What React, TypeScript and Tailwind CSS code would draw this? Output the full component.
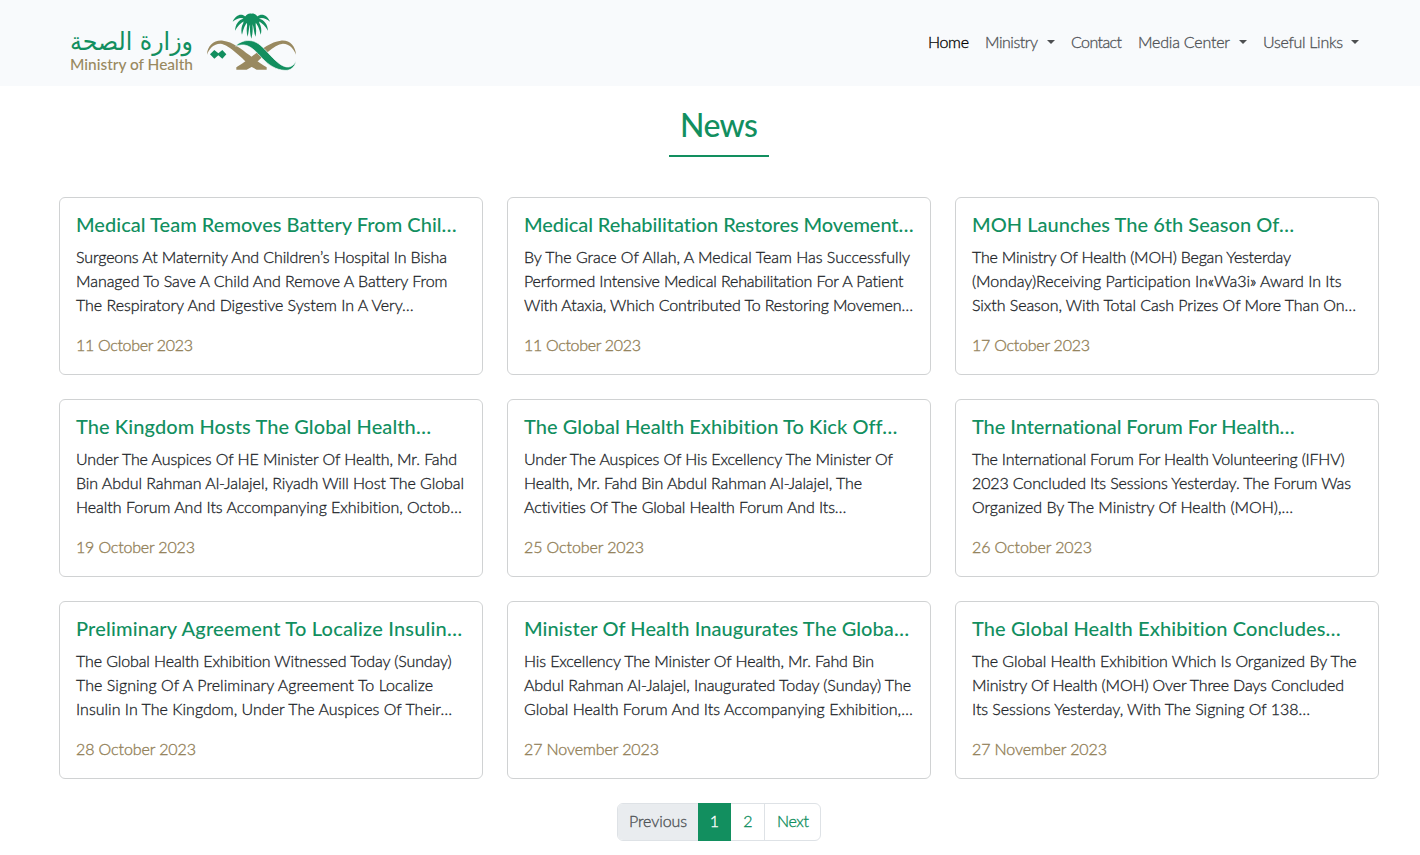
import { useLayoutEffect, useRef, useState } from "react";

type Line = [text: string, width: number];

/* One line of text, tracked so that it fills the given measure. */
function Fit({ line, className = "" }: { line: Line; className?: string }) {
  const [text, width] = line;
  const ref = useRef<HTMLSpanElement>(null);
  const [spacing, setSpacing] = useState(0);
  useLayoutEffect(() => {
    const el = ref.current;
    if (!el) return;
    el.style.letterSpacing = "0px";
    setSpacing((width - el.getBoundingClientRect().width) / (text.length - 1));
    el.style.letterSpacing = "";
  }, [text, width]);
  return (
    <span className={`block whitespace-nowrap ${className}`} style={{ width }}>
      <span ref={ref} style={{ letterSpacing: `${spacing}px` }}>
        {text}
      </span>
    </span>
  );
}

const news: { title: Line; body: Line[]; date: Line }[] = [
  {
    title: ["Medical Team Removes Battery From Chil…", 380],
    body: [
      ["Surgeons At Maternity And Children’s Hospital In Bisha", 371],
      ["Managed To Save A Child And Remove A Battery From", 371],
      ["The Respiratory And Digestive System In A Very…", 338],
    ],
    date: ["11 October 2023", 117],
  },
  {
    title: ["Medical Rehabilitation Restores Movement…", 390],
    body: [
      ["By The Grace Of Allah, A Medical Team Has Successfully", 386],
      ["Performed Intensive Medical Rehabilitation For A Patient", 380],
      ["With Ataxia, Which Contributed To Restoring Movemen…", 389],
    ],
    date: ["11 October 2023", 117],
  },
  {
    title: ["MOH Launches The 6th Season Of…", 322],
    body: [
      ["The Ministry Of Health (MOH) Began Yesterday", 319],
      ["(Monday)Receiving Participation In«Wa3i» Award In Its", 370],
      ["Sixth Season, With Total Cash Prizes Of More Than On…", 384],
    ],
    date: ["17 October 2023", 118],
  },
  {
    title: ["The Kingdom Hosts The Global Health…", 355],
    body: [
      ["Under The Auspices Of HE Minister Of Health, Mr. Fahd", 381],
      ["Bin Abdul Rahman Al-Jalajel, Riyadh Will Host The Global", 388],
      ["Health Forum And Its Accompanying Exhibition, Octob…", 386],
    ],
    date: ["19 October 2023", 119],
  },
  {
    title: ["The Global Health Exhibition To Kick Off…", 373],
    body: [
      ["Under The Auspices Of His Excellency The Minister Of", 369],
      ["Health, Mr. Fahd Bin Abdul Rahman Al-Jalajel, The", 338],
      ["Activities Of The Global Health Forum And Its…", 323],
    ],
    date: ["25 October 2023", 120],
  },
  {
    title: ["The International Forum For Health…", 323],
    body: [
      ["The International Forum For Health Volunteering (IFHV)", 373],
      ["2023 Concluded Its Sessions Yesterday. The Forum Was", 379],
      ["Organized By The Ministry Of Health (MOH),…", 321],
    ],
    date: ["26 October 2023", 120],
  },
  {
    title: ["Preliminary Agreement To Localize Insulin…", 386],
    body: [
      ["The Global Health Exhibition Witnessed Today (Sunday)", 376],
      ["The Signing Of A Preliminary Agreement To Localize", 357],
      ["Insulin In The Kingdom, Under The Auspices Of Their…", 376],
    ],
    date: ["28 October 2023", 120],
  },
  {
    title: ["Minister Of Health Inaugurates The Globa…", 385],
    body: [
      ["His Excellency The Minister Of Health, Mr. Fahd Bin", 350],
      ["Abdul Rahman Al-Jalajel, Inaugurated Today (Sunday) The", 387],
      ["Global Health Forum And Its Accompanying Exhibition,…", 389],
    ],
    date: ["27 November 2023", 135],
  },
  {
    title: ["The Global Health Exhibition Concludes…", 369],
    body: [
      ["The Global Health Exhibition Which Is Organized By The", 385],
      ["Ministry Of Health (MOH) Over Three Days Concluded", 372],
      ["Its Sessions Yesterday, With The Signing Of 138…", 338],
    ],
    date: ["27 November 2023", 135],
  },
];

const links: { label: Line; menu?: boolean; active?: boolean }[] = [
  { label: ["Home", 41], active: true },
  { label: ["Ministry", 53], menu: true },
  { label: ["Contact", 51] },
  { label: ["Media Center", 92], menu: true },
  { label: ["Useful Links", 80], menu: true },
];

function Logo() {
  return (
    <svg width="236" height="78" viewBox="0 0 236 78" role="img" aria-label="Ministry of Health">
      <text
        x="133"
        y="46"
        direction="rtl"
        textLength="123"
        lengthAdjust="spacingAndGlyphs"
        className="fill-[#128f5f] font-['DejaVu_Sans',sans-serif] text-[25px] font-normal"
      >
        وزارة الصحة
      </text>
      <text
        x="10"
        y="65.5"
        textLength="123"
        lengthAdjust="spacingAndGlyphs"
        className="fill-[#998960] font-['Lato',sans-serif] text-[15.5px] font-medium"
      >
        Ministry of Health
      </text>
      <g transform="translate(136 0) scale(.33333)">
        <g fill="#128f5f">
          <path d="M166 29C158 27 150 33 148 38C137 27 119 32 110 53C124 43 134 40 143 44C128 46 118 61 117 80C124 68 133 57 146 50C136 64 134 79 138 92C142 74 147 61 156 53C151 70 151 86 155 98C158 85 159 69 163 58C161 75 162 91 166 104C170 91 171 75 169 58C173 69 174 85 178 98C182 86 181 70 176 53C185 61 190 74 194 92C198 79 196 64 186 50C199 57 209 68 216 80C215 61 204 46 189 44C199 40 209 43 222 53C214 32 195 27 184 38C182 33 174 27 166 29Z" />
          <path d="M143 41C148 35 158 32 166 32C174 32 184 35 189 41L190 56L180 54L177 70L170 60L166 74L162 60L155 70L152 54L142 56Z" />
          <path d="M55 138L67 148L79 138L91 151L79 164L67 154L55 164L42 151Z" />
        </g>
        <g fill="#998960">
          <path d="M33 152C34 125 54 107 81 110C110 113 137 136 160 153C181 170 197 180 212 190V197H182L166 188C141 166 101 122 73 119C52 119 40 134 33 152Z" />
          <path d="M300 152C298 125 281 107 254 110C225 113 196 136 173 153C152 170 137 180 121 190V197H152L168 188C193 166 231 122 261 119C281 119 293 134 300 152Z" />
        </g>
        <path
          fill="#128f5f"
          stroke="#f8fafc"
          strokeWidth="2"
          d="M119 126C133 111 155 106 173 112C193 119 206 136 224 155C243 175 261 191 279 189C288 187 294 182 300 171C296 191 283 200 267 199C240 198 218 183 200 164C182 145 166 126 145 123C137 122 128 124 119 126Z"
        />
      </g>
    </svg>
  );
}

export default function App() {
  return (
    <div className="h-[855px] overflow-hidden bg-white font-['Lato',sans-serif] text-base leading-6 font-light text-[#212529]">
      <header className="flex h-[86px] items-center justify-between bg-[#f8fafc] pr-[53px] pl-[60px]">
        <div className="self-start pt-1">
          <Logo />
        </div>
        <nav className="flex pb-0.5 [-webkit-text-stroke:0.3px]">
          {links.map(({ label, menu, active }) => (
            <a
              key={label[0]}
              className={`flex items-center px-2 ${active ? "text-black" : "text-[#505356]"}`}
            >
              <Fit line={label} />
              {menu && (
                <span
                  className={`h-0 w-2 border-x-4 border-t-4 border-x-transparent border-t-[#4d4f51] ${label[0] === "Useful Links" ? "ml-2" : "ml-[9px]"}`}
                />
              )}
            </a>
          ))}
        </nav>
      </header>

      <main className="ml-[59px] w-[1320px]">
        <div className="flex flex-col items-center pt-5">
          <h1 className="flex h-[51px] w-[100px] justify-center border-b-2 border-[#128f5f] text-[32px] leading-[38px] font-medium text-[#128f5f]">
            <Fit line={["News", 78]} />
          </h1>
        </div>

        <section className="mt-10 grid grid-cols-3 gap-6">
          {news.map(({ title, body, date }) => (
            <article
              key={title[0]}
              className="h-[178px] rounded-md border border-[#d0d2d3] px-4 pt-3.5"
            >
              <h2 className="mb-[9px] text-xl leading-6 font-medium text-[#128f5f]">
                <Fit line={title} />
              </h2>
              <div className="[-webkit-text-stroke:0.3px]">
                {body.map((line) => (
                  <Fit key={line[0]} line={line} />
                ))}
              </div>
              <time className="mt-4 block text-[#93825a] [-webkit-text-stroke:0.35px]">
                <Fit line={date} />
              </time>
            </article>
          ))}
        </section>

        <div className="mt-6 flex justify-center">
          <div className="flex h-[38px] w-[204px] rounded-md border border-[#dee2e6] text-[#128f5f] [-webkit-text-stroke:0.35px]">
            <span className="flex w-20 items-center rounded-l-[5px] bg-[#e9ecef] pb-0.5 pl-[11px] text-[#505458]">
              <Fit line={["Previous", 58]} />
            </span>
            <span className="-my-px flex w-[33px] items-center justify-center bg-[#128f5f] pb-0.5 text-white">
              1
            </span>
            <span className="flex w-[34px] items-center justify-center border-r border-[#dee2e6] pb-0.5 pl-px">
              2
            </span>
            <span className="flex flex-1 items-center pb-0.5 pl-3">
              <Fit line={["Next", 32]} />
            </span>
          </div>
        </div>
      </main>
    </div>
  );
}
